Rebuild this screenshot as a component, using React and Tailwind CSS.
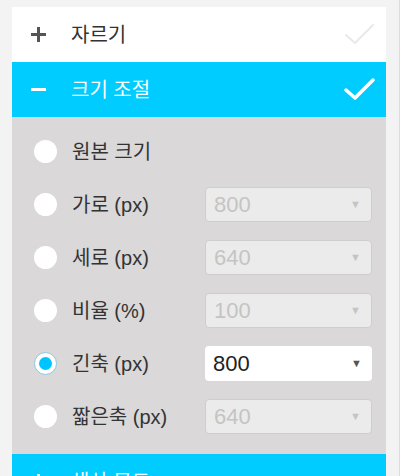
import React, { useState } from "react";

const FONT = { fontFamily: '"Liberation Sans", "Noto Sans CJK KR", sans-serif' };

const OPTIONS = [
  { id: "original", label: "원본 크기" },
  { id: "width", label: "가로 (px)", value: "800" },
  { id: "height", label: "세로 (px)", value: "640" },
  { id: "ratio", label: "비율 (%)", value: "100" },
  { id: "long", label: "긴축 (px)", value: "800" },
  { id: "short", label: "짧은축 (px)", value: "640" },
];

function Check({ className, strokeWidth = 3 }) {
  return (
    <svg width="32" height="24" viewBox="0 0 32 24" className={className} fill="none">
      <path d="M2 12 L11 20 L29 2" stroke="currentColor" strokeWidth={strokeWidth} strokeLinecap="round" strokeLinejoin="round" />
    </svg>
  );
}

function Radio({ checked }) {
  return (
    <span
      className={`flex h-[23px] w-[23px] items-center justify-center rounded-full bg-white ${
        checked ? "border border-[#8cc6dc]" : ""
      }`}
    >
      {checked && <span className="h-[13px] w-[13px] rounded-full bg-[#00c4ff]" />}
    </span>
  );
}

function Select({ value, disabled }) {
  return (
    <div
      className={`flex h-[35px] w-[167px] items-center justify-between rounded-[4px] pl-[8px] pr-[10px] ${
        disabled ? "border border-[#cfcdce] bg-[#ebebeb] text-[#c4c4c4]" : "bg-white text-[#222]"
      }`}
    >
      <span className="text-[22px] leading-none">{value}</span>
      <span className={`text-[11px] ${disabled ? "text-[#c4c4c4]" : "text-[#555]"}`}>▼</span>
    </div>
  );
}

function Header({ open, active, label }) {
  return (
    <div className={`flex h-[55px] items-center pl-[18px] pr-[10px] ${active ? "bg-[#00ccff]" : "bg-white"}`}>
      <svg width="17" height="17" viewBox="0 0 17 17">
        <path d={open ? "M1 8.5 H16" : "M8.5 1 V16 M1 8.5 H16"} stroke={active ? "#fff" : "#555"} strokeWidth="3" />
      </svg>
      <span className={`ml-[24px] flex-1 text-[20px] ${active ? "text-white" : "text-[#333]"}`}>{label}</span>
      {label !== "색상 모드" && (
        <Check className={open ? "text-white" : "text-[#e9e9e9]"} strokeWidth={open ? 3.5 : 2} />
      )}
    </div>
  );
}

export default function App() {
  const [selected, setSelected] = useState("long");

  return (
    <div className="h-[476px] w-[400px] overflow-hidden border-r border-[#dcdcdc] bg-[#f3f3f3] pl-[12px] pr-[13px] pt-[7px]" style={FONT}>
      <Header label="자르기" />
      <Header label="크기 조절" open active />

      <div className="bg-[#dad8d9] pb-[11px] pl-[22px] pr-[14px] pt-[8px]">
        {OPTIONS.map((o) => (
          <div key={o.id} className="flex h-[53px] items-center" onClick={() => setSelected(o.id)}>
            <Radio checked={selected === o.id} />
            <span className="ml-[15px] flex-1 text-[20px] text-[#333]">{o.label}</span>
            {o.value && <Select value={o.value} disabled={selected !== o.id} />}
          </div>
        ))}
      </div>

      <Header label="색상 모드" active />
    </div>
  );
}
